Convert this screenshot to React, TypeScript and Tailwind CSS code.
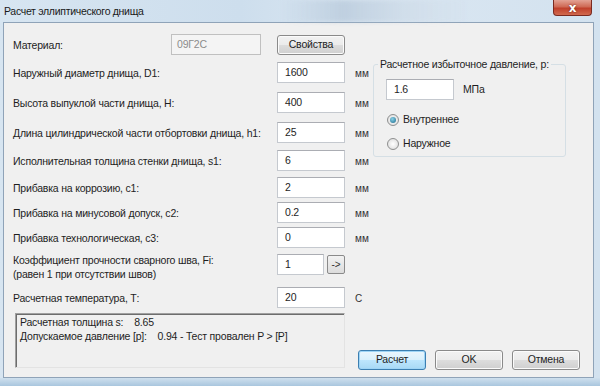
import React from "react";

const font = { fontFamily: '"Liberation Sans", Arial, sans-serif' };

function TextBox({ value, w = "w-[68px]" }: { value: string; w?: string }) {
  return (
    <div
      className={`${w} h-[21px] bg-white border border-[#c5c9cf] border-t-[#abadb3] flex items-center pl-[7px] text-[10.5px] tracking-[-0.2px] text-[#1e1e1e]`}
    >
      {value}
    </div>
  );
}

function Btn({ label, w, focused = false }: { label: string; w: string; focused?: boolean }) {
  return (
    <div
      className={`${w} h-[20px] rounded-[3px] border flex items-center justify-center text-[10.5px] tracking-[-0.2px] text-[#1e1e1e] ${
        focused
          ? "border-[#3c7fb1] bg-[linear-gradient(#eaf6fd,#d9f0fc_50%,#bee6fd_50%,#a7d9f5)] shadow-[inset_0_0_0_1px_#9fd5f6]"
          : "border-[#8a8a8a] bg-[linear-gradient(#f2f2f2,#ebebeb_50%,#dddddd_50%,#cfcfcf)] shadow-[inset_0_0_0_1px_#fbfbfb]"
      }`}
    >
      {label}
    </div>
  );
}

function Row({ label, value, unit = "мм", mt }: { label: string; value: string; unit?: string; mt: string }) {
  return (
    <div className={`flex items-center h-[21px] ${mt}`}>
      <div className="w-[264px] whitespace-nowrap text-[10.5px] tracking-[-0.2px] text-[#1e1e1e] pt-[2px]">{label}</div>
      <TextBox value={value} />
      <div className="ml-[10px] text-[10px] text-[#333] pt-[1px]">{unit}</div>
    </div>
  );
}

function Radio({ checked, label }: { checked: boolean; label: string }) {
  return (
    <div className="flex items-center gap-[4px]">
      <div className="w-[12px] h-[12px] rounded-full border border-[#8e8f8f] bg-[radial-gradient(#ffffff,#d8d8d8)] flex items-center justify-center">
        {checked && (
          <div className="w-[6px] h-[6px] rounded-full bg-[radial-gradient(circle_at_40%_35%,#8ad1e8,#1a6a8a)]" />
        )}
      </div>
      <span className="text-[10.5px] tracking-[-0.2px] text-[#1e1e1e]">{label}</span>
    </div>
  );
}

export default function App() {
  return (
    <div
      className="w-[600px] h-[386px] overflow-hidden flex flex-col bg-[linear-gradient(90deg,#d7e5f1,#cddeed_40%,#dbe7f2_60%,#d3e2ef)]"
      style={font}
    >
      {/* Title bar */}
      <div className="h-[22px] flex items-start relative shrink-0">
        <div className="relative z-10 pl-[4px] pt-[4px] text-[10.5px] tracking-[-0.3px] text-[#1a1a1a] whitespace-nowrap">
          Расчет эллиптического днища
        </div>
        <div className="absolute left-[280px] top-[0px] w-[190px] h-[22px] bg-[linear-gradient(90deg,rgba(200,214,228,0),rgba(170,190,210,0.55),rgba(190,205,220,0.3),rgba(200,214,228,0))] blur-[2px]" />
        <div className="absolute left-[553px] top-0 w-[39px] h-[16px] rounded-b-[4px] border border-t-0 border-[#7a2a20] bg-[linear-gradient(#e3a294,#cf6a55_45%,#c0402b_55%,#d16a4f)] flex items-center justify-center">
          <span className="text-white text-[12px] font-bold leading-none" style={{ fontFamily: '"DejaVu Sans", sans-serif', textShadow: "0 0 2px #5a1a10" }}>
            x
          </span>
        </div>
      </div>

      {/* Client area */}
      <div className="ml-[3px] w-[591px] h-[356px] border border-[#8fa3b8] bg-[#f0f0f0] flex shrink-0">
        {/* Left column */}
        <div className="pl-[9px] w-[370px] flex flex-col">
          <div className="flex items-center h-[21px] mt-[11px]">
            <div className="w-[158px] text-[10.5px] tracking-[-0.2px] text-[#1e1e1e] pt-[2px]">Материал:</div>
            <div className="w-[90px] h-[21px] border border-[#c0c0c0] bg-[#f4f4f4] flex items-center pl-[5px] text-[10.5px] tracking-[-0.2px] text-[#8c8c8c]">
              09Г2С
            </div>
            <div className="ml-[16px]">
              <Btn label="Свойства" w="w-[68px]" />
            </div>
          </div>
          <Row mt="mt-[7px]" label="Наружный диаметр днища, D1:" value="1600" />
          <Row mt="mt-[9px]" label="Высота выпуклой части днища, H:" value="400" />
          <Row mt="mt-[9px]" label="Длина цилиндрической части отбортовки днища, h1:" value="25" />
          <Row mt="mt-[7px]" label="Исполнительная толщина стенки днища, s1:" value="6" />
          <Row mt="mt-[6px]" label="Прибавка на коррозию, с1:" value="2" />
          <Row mt="mt-[4px]" label="Прибавка на минусовой допуск, с2:" value="0.2" />
          <Row mt="mt-[4px]" label="Прибавка технологическая, с3:" value="0" />
          <div className="flex items-start h-[21px] mt-[6px]">
            <div className="w-[264px] whitespace-nowrap text-[10.5px] tracking-[-0.2px] leading-[14px] text-[#1e1e1e] -mt-[1px]">
              Коэффициент прочности сварного шва, Fi:
              <br />
              (равен 1 при отсутствии швов)
            </div>
            <TextBox value="1" w="w-[47px]" />
            <div className="ml-[3px] mt-[1px] w-[18px] h-[19px] rounded-[2px] border border-[#8a8a8a] bg-[linear-gradient(#f2f2f2,#dcdcdc)] flex items-center justify-center text-[10px] text-[#333]">
              -&gt;
            </div>
          </div>
          <Row mt="mt-[12px]" label="Расчетная температура, Т:" value="20" unit="С" />
          <div className="mt-[5px] ml-[2px] w-[330px] h-[55px] border border-[#a0a0a0] border-r-[#e3e3e3] border-b-[#e3e3e3] shadow-[inset_1px_1px_0_#6d6d6d] pl-[4px] pt-[1px] text-[10.5px] tracking-[-0.2px] leading-[14px] text-[#1e1e1e]">
            <div>Расчетная толщина s:&nbsp;&nbsp;&nbsp; 8.65</div>
            <div>Допускаемое давление [p]:&nbsp;&nbsp;&nbsp; 0.94 - Тест провален P &gt; [P]</div>
          </div>
        </div>

        {/* Right column */}
        <div className="flex-1 flex flex-col pr-[13px]">
          <div className="mt-[41px] ml-[3px] w-[193px] h-[93px] border border-[#d5dfe5] rounded-[3px] relative">
            <div className="absolute -top-[8px] left-[4px] px-[2px] bg-[#f0f0f0] text-[10.5px] tracking-[-0.2px] whitespace-nowrap text-[#1e1e1e]">
              Расчетное избыточное давление, p:
            </div>
            <div className="flex items-center mt-[14px] ml-[12px]">
              <TextBox value="1.6" />
              <span className="ml-[9px] text-[10.5px] tracking-[-0.2px] text-[#1e1e1e]">МПа</span>
            </div>
            <div className="mt-[12px] ml-[13px]">
              <Radio checked label="Внутреннее" />
            </div>
            <div className="mt-[8px] ml-[13px]">
              <Radio checked={false} label="Наружное" />
            </div>
          </div>
          <div className="mt-auto mb-[7px] flex gap-[9px] -ml-[12px]">
            <Btn label="Расчет" w="w-[68px]" focused />
            <Btn label="OK" w="w-[68px]" />
            <Btn label="Отмена" w="w-[68px]" />
          </div>
        </div>
      </div>
      <div className="flex-1 bg-[linear-gradient(#cfe0ee,#a9c6de)]" />
    </div>
  );
}
